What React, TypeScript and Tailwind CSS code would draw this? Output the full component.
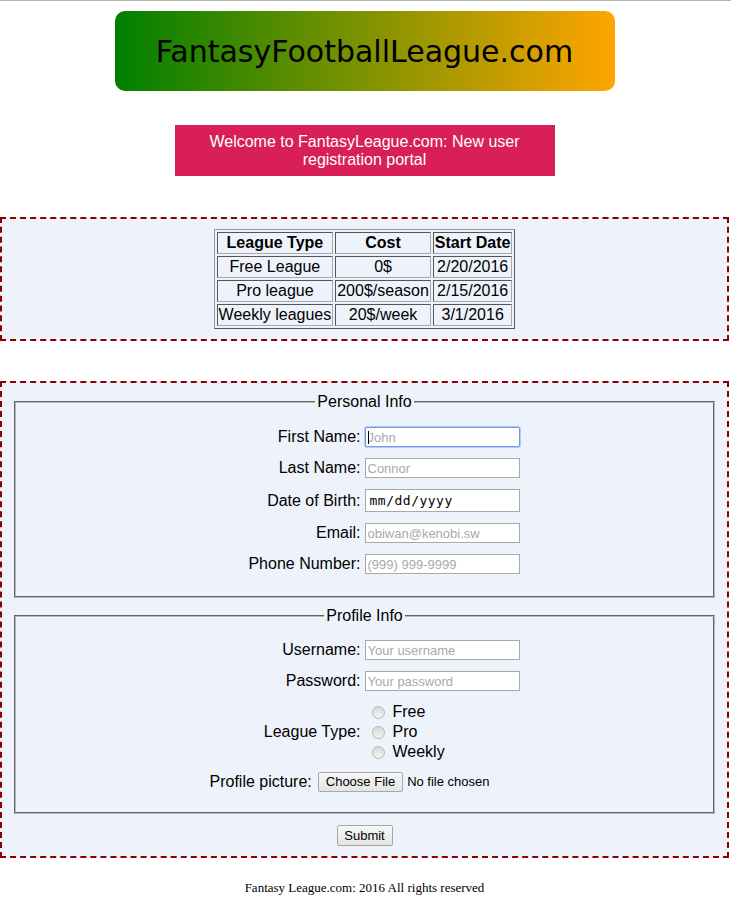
import React from "react";

const sans = "font-['Liberation_Sans',Arial,sans-serif]";

function TextInput({ placeholder, focused }: { placeholder: string; focused?: boolean }) {
  return (
    <div className="relative">
      <input
        type="text"
        placeholder={placeholder}
        className={
          "block w-[155px] h-[20px] bg-white px-[2px] text-[13px] text-black placeholder:text-[#a9a9a9] outline-none font-['Liberation_Sans',Arial,sans-serif] " +
          (focused
            ? "border border-[#6f9be6] rounded-[2px] shadow-[0_0_0_1px_#b4ccf2]"
            : "border border-[#a9a9a9]")
        }
      />
      {focused && <span className="absolute left-[3px] top-[4px] w-px h-[13px] bg-black" />}
    </div>
  );
}

function Row({ label, children }: { label: string; children: React.ReactNode }) {
  return (
    <div className="flex justify-center">
      <div className="w-[310px] flex items-center">
        <span className="w-[151px] text-right text-[16px] leading-[18px] text-black">{label}</span>
        <span className="ml-[4px]">{children}</span>
      </div>
    </div>
  );
}

function Radio({ label }: { label: string }) {
  return (
    <div className="flex items-center h-[20px]">
      <span className="w-[13px] h-[13px] rounded-full border border-[#b5b5b5] bg-[linear-gradient(to_bottom,#d8d8d8,#f4f4f4)] ml-[11px]" />
      <span className="ml-[8px] text-[16px] leading-[18px] text-black">{label}</span>
    </div>
  );
}

function Fieldset({ legend, children, className }: { legend: string; children: React.ReactNode; className?: string }) {
  return (
    <fieldset
      className={
        "border-2 [border-style:groove] border-[#b8b8b8] px-[12px] " + (className ?? "")
      }
    >
      <legend className="mx-auto px-[2px] text-[16px] leading-[18px] text-black">{legend}</legend>
      {children}
    </fieldset>
  );
}

export default function App() {
  const rows = [
    ["Free League", "0$", "2/20/2016"],
    ["Pro league", "200$/season", "2/15/2016"],
    ["Weekly leagues", "20$/week", "3/1/2016"],
  ];
  return (
    <div className={"w-full bg-white min-h-[900px] border-t border-[#b4b4b4] " + sans}>
      <div className="w-[729px]">
        <div className="mt-[10px] mx-auto w-[500px] h-[80px] rounded-[10px] bg-[linear-gradient(to_right,#008000,#ffa500)] flex items-center justify-center">
          <span className="text-[30px] text-black font-['DejaVu_Sans',Verdana,sans-serif]">
            FantasyFootballLeague.com
          </span>
        </div>

        <div className="mt-[34px] mx-auto w-[380px] bg-[#d81f58] pt-[8px] pb-[7px] px-[10px] text-center text-white text-[16px] leading-[18px]">
          Welcome to FantasyLeague.com: New user registration portal
        </div>

        <div className="mt-[41px] border-2 border-dashed border-[#8b0000] bg-[#eef3fb] pt-[10px] pb-[10px] flex justify-center">
          <table className="border border-[#9a9a9a] border-r-[#555] border-b-[#555] border-separate border-spacing-[2px] text-[16px] leading-[18px] text-black">
            <thead>
              <tr>
                {["League Type", "Cost", "Start Date"].map((h) => (
                  <th key={h} className="border border-[#555] border-r-[#aaa] border-b-[#aaa] p-[1px] font-bold text-center">
                    {h}
                  </th>
                ))}
              </tr>
            </thead>
            <tbody>
              {rows.map((r) => (
                <tr key={r[0]}>
                  {r.map((c) => (
                    <td key={c} className="border border-[#555] border-r-[#aaa] border-b-[#aaa] p-[1px] text-center">
                      {c}
                    </td>
                  ))}
                </tr>
              ))}
            </tbody>
          </table>
        </div>

        <div className="mt-[40px] border-2 border-dashed border-[#8b0000] bg-[#eef3fb] pt-[10px] pb-[10px] px-[12px]">
          <Fieldset legend="Personal Info" className="pt-[16px] pb-[22px]">
            <div className="flex flex-col gap-[11px]">
              <Row label="First Name:">
                <TextInput placeholder="John" focused />
              </Row>
              <Row label="Last Name:">
                <TextInput placeholder="Connor" />
              </Row>
              <Row label="Date of Birth:">
                <div className="w-[155px] h-[23px] border border-[#a9a9a9] bg-white pl-[4px] flex items-center text-[13px] tracking-[0.5px] text-black font-['DejaVu_Sans_Mono',monospace]">
                  mm/dd/yyyy
                </div>
              </Row>
              <Row label="Email:">
                <TextInput placeholder="obiwan@kenobi.sw" />
              </Row>
              <Row label="Phone Number:">
                <TextInput placeholder="(999) 999-9999" />
              </Row>
            </div>
          </Fieldset>

          <Fieldset legend="Profile Info" className="mt-[9px] pt-[15px] pb-[20px]">
            <div className="flex flex-col gap-[11px]">
              <Row label="Username:">
                <TextInput placeholder="Your username" />
              </Row>
              <Row label="Password:">
                <TextInput placeholder="Your password" />
              </Row>
              <div className="flex justify-center">
                <div className="w-[310px] flex items-center">
                  <span className="w-[151px] text-right text-[16px] leading-[18px] text-black">League Type:</span>
                  <div className="flex flex-col">
                    <Radio label="Free" />
                    <Radio label="Pro" />
                    <Radio label="Weekly" />
                  </div>
                </div>
              </div>
              <div className="flex justify-center -mt-[1px]">
                <div className="w-[310px] flex items-center">
                  <span className="text-[16px] leading-[18px] text-black">Profile picture:</span>
                  <button className="ml-[6px] h-[20px] px-[7px] border border-[#a9a9a9] rounded-[2px] bg-[linear-gradient(to_bottom,#f7f7f7,#e4e4e4)] text-[13px] leading-[16px] text-black">
                    Choose File
                  </button>
                  <span className="ml-[4px] text-[13px] text-black">No file chosen</span>
                </div>
              </div>
            </div>
          </Fieldset>

          <div className="mt-[11px] flex justify-center">
            <button className="h-[21px] w-[56px] border border-[#a9a9a9] rounded-[2px] bg-[linear-gradient(to_bottom,#f7f7f7,#e4e4e4)] text-[13px] leading-[16px] text-black">
              Submit
            </button>
          </div>
        </div>

        <div className="mt-[22px] text-center text-[13px] leading-[15px] text-black font-['Liberation_Serif','Times_New_Roman',serif]">
          Fantasy League.com: 2016 All rights reserved
        </div>
      </div>
    </div>
  );
}
